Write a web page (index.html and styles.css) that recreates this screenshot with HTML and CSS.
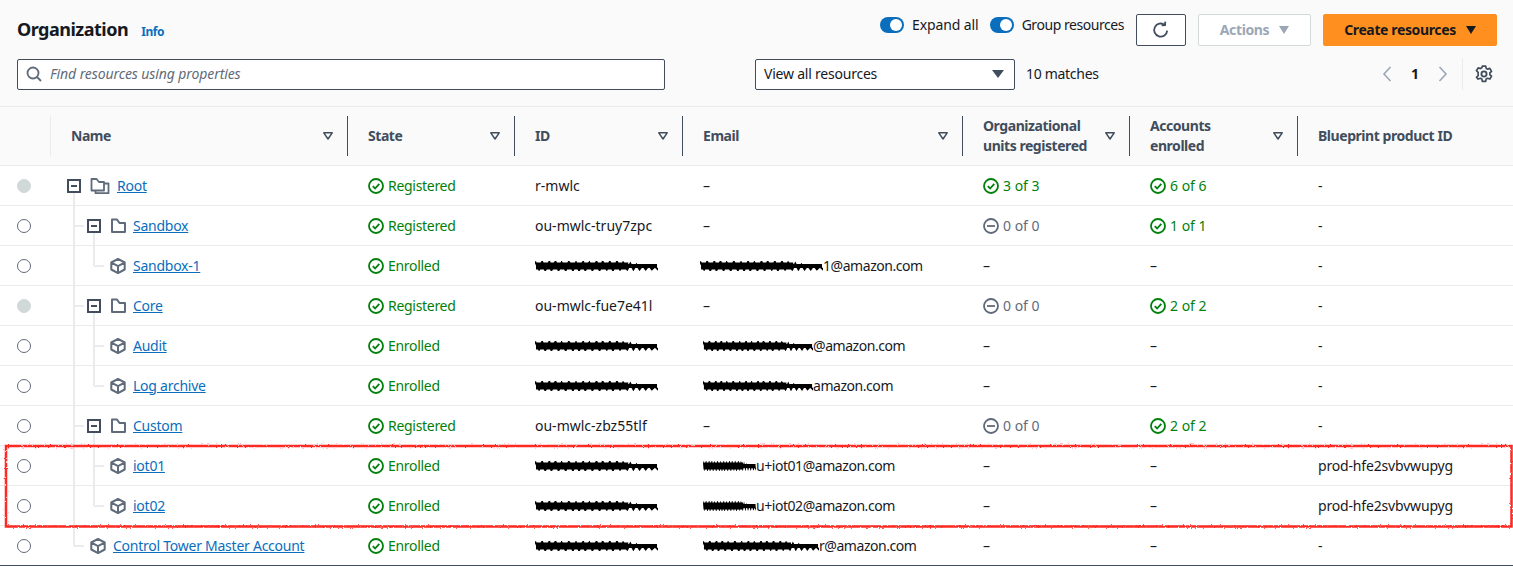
FILE: index.html
```html
<!DOCTYPE html>
<html lang="en">
<head>
<meta charset="utf-8">
<title>Organization</title>
<link rel="stylesheet" href="styles.css">
</head>
<body>
<svg class="sprite" width="0" height="0" aria-hidden="true">
  <defs>
    <symbol id="i-ok" viewBox="0 0 16 16"><circle cx="8" cy="8" r="7" fill="none" stroke="currentColor" stroke-width="1.8"/><path d="M4.800 8.200l2.300 2.300 4.200-4.600" fill="none" stroke="currentColor" stroke-width="1.8"/></symbol>
    <symbol id="i-none" viewBox="0 0 16 16"><circle cx="8" cy="8" r="7" fill="none" stroke="currentColor" stroke-width="1.8"/><path d="M4 8h8" fill="none" stroke="currentColor" stroke-width="1.8"/></symbol>
    <symbol id="i-cube" viewBox="0 0 16 16"><path d="M8 .9l6.700 3.600v7L8 15.100l-6.700-3.600v-7zM1.500 4.700L8 8.200l6.500-3.500M8 8.200v6.800" fill="none" stroke="currentColor" stroke-width="2" stroke-linejoin="round"/></symbol>
    <symbol id="i-folder" viewBox="0 0 16 16"><path d="M2 1.500h5l2.500 3.500h5.500v9H2z" fill="none" stroke="currentColor" stroke-width="2" stroke-linejoin="round"/></symbol>
    <symbol id="i-folders" viewBox="0 0 20 16"><path d="M1.500 1h5l2.500 3h5v8.500H1.500z" fill="none" stroke="currentColor" stroke-width="1.800" stroke-linejoin="round"/><path d="M5.500 12.500v2.700h13V5.500H14" fill="none" stroke="currentColor" stroke-width="1.800" stroke-linejoin="round"/></symbol>
    <symbol id="i-filter" viewBox="0 0 10 8"><path d="M.8.8h8.400L5 7z" fill="none" stroke="currentColor" stroke-width="1.500" stroke-linejoin="round"/></symbol>
    <symbol id="i-scribble" viewBox="0 0 120 10" preserveAspectRatio="none"><path d="M0 .5l4 8 3-8 3 9 4-9 2 9 4-9 3 9 3-8 4 8 3-9 4 9 3-8 3 8 4-9 2 9 4-8 3 8 4-9 3 9 3-9 4 8 3-8 3 9 4-9 3 8 3-7 4 7 3-6 3 6 3-5 3 5 3-4 3 4 3-4 3 4 3-3 3 3 3-3 3 3 3-3 3 3" fill="none" stroke="#000" stroke-width="1.800"/><path d="M1 1.500h90v7H1z" fill="#000"/><path d="M90 3h29v4H90z" fill="#000"/></symbol>
  </defs>
</svg>

<header class="toolbar">
  <div class="toolbar-top">
    <div class="title-group">
      <h1 class="title">Organization</h1>
      <a class="info" href="#">Info</a>
    </div>
    <div class="actions">
      <span class="toggle-label"><span class="toggle"></span>Expand all</span>
      <span class="toggle-label tight"><span class="toggle"></span>Group resources</span>
      <button class="btn btn-icon" type="button" aria-label="Refresh">
        <svg width="18" height="18" viewBox="0 0 16 16"><path d="M13.500 8.500a5.800 5.800 0 1 1-2.200-5M11.800.6l-.2 3.100-3 .1" fill="none" stroke="currentColor" stroke-width="1.600"/></svg>
      </button>
      <button class="btn btn-disabled" type="button">Actions<span class="caret"></span></button>
      <button class="btn btn-primary" type="button">Create resources<span class="caret"></span></button>
    </div>
  </div>
  <div class="toolbar-bottom">
    <label class="search">
      <svg width="16" height="16" viewBox="0 0 16 16"><circle cx="7" cy="7" r="5.500" fill="none" stroke="currentColor" stroke-width="1.800"/><path d="M11 11l4 4" stroke="currentColor" stroke-width="1.800"/></svg>
      <span class="search-text">Find resources using properties</span>
    </label>
    <div class="select">View all resources<span class="caret"></span></div>
    <span class="matches">10 matches</span>
    <div class="pager">
      <svg class="chev" width="12" height="16" viewBox="0 0 12 16"><path d="M9.500 1L3 8l6.500 7" fill="none" stroke="currentColor" stroke-width="1.600"/></svg>
      <strong class="page-no">1</strong>
      <svg class="chev" width="12" height="16" viewBox="0 0 12 16"><path d="M2.500 1L9 8l-6.500 7" fill="none" stroke="currentColor" stroke-width="1.600"/></svg>
      <span class="gear-wrap">
        <svg width="18" height="18" viewBox="0 0 16 16"><circle cx="8" cy="8" r="2.300" fill="none" stroke="currentColor" stroke-width="1.600"/><path d="M6.500 1h3l.4 2 1.300.7 2-.7 1.500 2.600-1.500 1.400v1.500l1.500 1.400-1.500 2.600-2-.7-1.300.7-.4 2h-3l-.4-2-1.300-.7-2 .7L1.300 10.900l1.500-1.400V6.500L1.300 5.100l1.500-2.600 2 .7 1.300-.7z" fill="none" stroke="currentColor" stroke-width="1.500" stroke-linejoin="round"/></svg>
      </span>
    </div>
  </div>
</header>

<table class="grid">
  <colgroup>
    <col class="c-sel"><col class="c-name"><col class="c-state"><col class="c-id"><col class="c-email"><col class="c-ou"><col class="c-acc"><col class="c-bp">
  </colgroup>
  <thead>
    <tr>
      <th><div class="th-in th-light"></div></th>
      <th><div class="th-in"><span>Name</span><svg class="filter"><use href="#i-filter"/></svg></div></th>
      <th><div class="th-in"><span>State</span><svg class="filter"><use href="#i-filter"/></svg></div></th>
      <th><div class="th-in"><span>ID</span><svg class="filter"><use href="#i-filter"/></svg></div></th>
      <th><div class="th-in"><span>Email</span><svg class="filter"><use href="#i-filter"/></svg></div></th>
      <th><div class="th-in"><span>Organizational<br>units registered</span><svg class="filter"><use href="#i-filter"/></svg></div></th>
      <th><div class="th-in"><span>Accounts<br>enrolled</span><svg class="filter"><use href="#i-filter"/></svg></div></th>
      <th><div class="th-in th-last"><span>Blueprint product ID</span></div></th>
    </tr>
  </thead>
  <tbody>
    <tr>
      <td class="sel"><span class="radio radio-off"></span></td>
      <td class="tree"><div class="tree-in"><span class="box"></span><svg class="ico ico-root"><use href="#i-folders"/></svg><a href="#">Root</a></div></td>
      <td><span class="st ok"><svg class="st-i"><use href="#i-ok"/></svg>Registered</span></td>
      <td>r-mwlc</td><td>–</td>
      <td><span class="st cnt ok"><svg class="st-i"><use href="#i-ok"/></svg>3 of 3</span></td>
      <td><span class="st cnt ok"><svg class="st-i"><use href="#i-ok"/></svg>6 of 6</span></td>
      <td>-</td>
    </tr>
    <tr>
      <td class="sel"><span class="radio"></span></td>
      <td class="tree"><div class="tree-in"><span class="guide branch"></span><span class="box"></span><svg class="ico"><use href="#i-folder"/></svg><a href="#">Sandbox</a></div></td>
      <td><span class="st ok"><svg class="st-i"><use href="#i-ok"/></svg>Registered</span></td>
      <td>ou-mwlc-truy7zpc</td><td>–</td>
      <td><span class="st cnt none"><svg class="st-i"><use href="#i-none"/></svg>0 of 0</span></td>
      <td><span class="st cnt ok"><svg class="st-i"><use href="#i-ok"/></svg>1 of 1</span></td>
      <td>-</td>
    </tr>
    <tr>
      <td class="sel"><span class="radio"></span></td>
      <td class="tree"><div class="tree-in"><span class="guide through"></span><span class="guide end"></span><svg class="ico"><use href="#i-cube"/></svg><a href="#">Sandbox-1</a></div></td>
      <td><span class="st ok"><svg class="st-i"><use href="#i-ok"/></svg>Enrolled</span></td>
      <td><svg class="scrib scrib-id"><use href="#i-scribble"/></svg></td>
      <td class="mail"><svg class="scrib scrib-120"><use href="#i-scribble"/></svg>1@amazon.com</td>
      <td>–</td><td>–</td><td>-</td>
    </tr>
    <tr>
      <td class="sel"><span class="radio radio-off"></span></td>
      <td class="tree"><div class="tree-in"><span class="guide branch"></span><span class="box"></span><svg class="ico"><use href="#i-folder"/></svg><a href="#">Core</a></div></td>
      <td><span class="st ok"><svg class="st-i"><use href="#i-ok"/></svg>Registered</span></td>
      <td>ou-mwlc-fue7e41l</td><td>–</td>
      <td><span class="st cnt none"><svg class="st-i"><use href="#i-none"/></svg>0 of 0</span></td>
      <td><span class="st cnt ok"><svg class="st-i"><use href="#i-ok"/></svg>2 of 2</span></td>
      <td>-</td>
    </tr>
    <tr>
      <td class="sel"><span class="radio"></span></td>
      <td class="tree"><div class="tree-in"><span class="guide through"></span><span class="guide branch"></span><svg class="ico"><use href="#i-cube"/></svg><a href="#">Audit</a></div></td>
      <td><span class="st ok"><svg class="st-i"><use href="#i-ok"/></svg>Enrolled</span></td>
      <td><svg class="scrib scrib-id"><use href="#i-scribble"/></svg></td>
      <td class="mail"><svg class="scrib scrib-112"><use href="#i-scribble"/></svg>@amazon.com</td>
      <td>–</td><td>–</td><td>-</td>
    </tr>
    <tr>
      <td class="sel"><span class="radio"></span></td>
      <td class="tree"><div class="tree-in"><span class="guide through"></span><span class="guide end"></span><svg class="ico"><use href="#i-cube"/></svg><a href="#">Log archive</a></div></td>
      <td><span class="st ok"><svg class="st-i"><use href="#i-ok"/></svg>Enrolled</span></td>
      <td><svg class="scrib scrib-id"><use href="#i-scribble"/></svg></td>
      <td class="mail"><svg class="scrib scrib-112"><use href="#i-scribble"/></svg>amazon.com</td>
      <td>–</td><td>–</td><td>-</td>
    </tr>
    <tr>
      <td class="sel"><span class="radio"></span></td>
      <td class="tree"><div class="tree-in"><span class="guide branch"></span><span class="box"></span><svg class="ico"><use href="#i-folder"/></svg><a href="#">Custom</a></div></td>
      <td><span class="st ok"><svg class="st-i"><use href="#i-ok"/></svg>Registered</span></td>
      <td>ou-mwlc-zbz55tlf</td><td>–</td>
      <td><span class="st cnt none"><svg class="st-i"><use href="#i-none"/></svg>0 of 0</span></td>
      <td><span class="st cnt ok"><svg class="st-i"><use href="#i-ok"/></svg>2 of 2</span></td>
      <td>-</td>
    </tr>
    <tr>
      <td class="sel"><span class="radio"></span></td>
      <td class="tree"><div class="tree-in"><span class="guide through"></span><span class="guide branch"></span><svg class="ico"><use href="#i-cube"/></svg><a href="#">iot01</a></div></td>
      <td><span class="st ok"><svg class="st-i"><use href="#i-ok"/></svg>Enrolled</span></td>
      <td><svg class="scrib scrib-id"><use href="#i-scribble"/></svg></td>
      <td class="mail"><svg class="scrib scrib-56"><use href="#i-scribble"/></svg>u+iot01@amazon.com</td>
      <td>–</td><td>–</td><td class="bp">prod-hfe2svbvwupyg</td>
    </tr>
    <tr>
      <td class="sel"><span class="radio"></span></td>
      <td class="tree"><div class="tree-in"><span class="guide through"></span><span class="guide end"></span><svg class="ico"><use href="#i-cube"/></svg><a href="#">iot02</a></div></td>
      <td><span class="st ok"><svg class="st-i"><use href="#i-ok"/></svg>Enrolled</span></td>
      <td><svg class="scrib scrib-id"><use href="#i-scribble"/></svg></td>
      <td class="mail"><svg class="scrib scrib-56"><use href="#i-scribble"/></svg>u+iot02@amazon.com</td>
      <td>–</td><td>–</td><td class="bp">prod-hfe2svbvwupyg</td>
    </tr>
    <tr>
      <td class="sel"><span class="radio"></span></td>
      <td class="tree"><div class="tree-in"><span class="guide end"></span><svg class="ico"><use href="#i-cube"/></svg><a href="#">Control Tower Master Account</a></div></td>
      <td><span class="st ok"><svg class="st-i"><use href="#i-ok"/></svg>Enrolled</span></td>
      <td><svg class="scrib scrib-id"><use href="#i-scribble"/></svg></td>
      <td class="mail"><svg class="scrib scrib-116"><use href="#i-scribble"/></svg>r@amazon.com</td>
      <td>–</td><td>–</td><td>-</td>
    </tr>
  </tbody>
</table>

<svg class="markup" width="1513" height="567" aria-hidden="true">
  <defs>
    <filter id="rough" x="-1%" y="-10%" width="102%" height="120%">
      <feTurbulence type="fractalNoise" baseFrequency="0.6" numOctaves="2" seed="3"/>
      <feDisplacementMap in="SourceGraphic" scale="2.500"/>
    </filter>
  </defs>
  <rect class="markup-rect" x="6" y="446" width="1505.500" height="80.500" filter="url(#rough)"/>
</svg>
</body>
</html>
```
FILE: styles.css
```css
* { box-sizing: border-box; }
html, body { margin: 0; height: 567px; overflow: hidden; }
body {
  position: relative;
  background: #fff;
  color: #16191f;
  font: 14px/20px "Noto Sans", "Liberation Sans", sans-serif;
}
a { color: #0a6ebd; letter-spacing: -.25px; }
.sprite { position: absolute; }

/* toolbar */
.toolbar {
  height: 107px;
  padding: 14px 16px 0 17px;
  background: #fafafa;
  border-bottom: 1px solid #e9ebed;
}
.toolbar-top { display: flex; justify-content: space-between; align-items: flex-start; height: 32px; }
.title-group { display: flex; align-items: baseline; gap: 13px; height: 30px; }
.title { margin: 0; font-size: 18px; line-height: 30px; font-weight: 700; letter-spacing: -.5px; }
.info { font-size: 12px; font-weight: 700; text-decoration: none; letter-spacing: -.4px; }
.actions { display: flex; align-items: flex-start; }
.toggle-label { display: flex; align-items: center; gap: 8px; height: 22px; margin-right: 11px; letter-spacing: -.1px; }
.toggle-label.tight { margin-right: 12px; letter-spacing: -.45px; }
.toggle { position: relative; width: 24px; height: 16px; border-radius: 8px; background: #0a6ebd; }
.toggle::after {
  content: ""; position: absolute; right: 2px; top: 2px;
  width: 12px; height: 12px; border-radius: 50%; background: #fff;
}
.btn {
  display: flex; align-items: center; justify-content: center; gap: 10px;
  height: 32px; border-radius: 2px; border: 1px solid #414d5c;
  background: #fff; font: 700 14px/20px "Noto Sans", "Liberation Sans", sans-serif; color: #16191f;
  letter-spacing: -.37px;
}
.btn-icon { width: 50px; color: #414d5c; }
.btn-disabled { width: 113px; margin-left: 12px; border-color: #d5dbdb; color: #9ba7b6; }
.btn-primary { width: 174px; margin-left: 12px; border-color: #ff9020; background: #ff9020; }
.caret { width: 0; height: 0; border-left: 5.5px solid transparent; border-right: 5.5px solid transparent; border-top: 8px solid currentColor; }

.toolbar-bottom { display: flex; align-items: center; height: 30px; margin-top: 13px; }
.search {
  display: flex; align-items: center; gap: 8px; width: 648px; height: 31px; padding-left: 8px;
  background: #fff; border: 1px solid #414d5c; border-radius: 2px; color: #5f6b7a;
}
.search-text { font-style: italic; letter-spacing: -.1px; }
.select {
  display: flex; align-items: center; justify-content: space-between;
  width: 260px; height: 31px; margin-left: 90px; padding: 0 10px 0 8px;
  background: #fff; border: 1px solid #414d5c; border-radius: 2px; letter-spacing: -.22px;
}
.select .caret { color: #414d5c; border-left-width: 6px; border-right-width: 6px; }
.matches { margin-left: 11px; letter-spacing: -.3px; }
.pager { display: flex; align-items: center; margin-left: auto; height: 32px; }
.chev { color: #9ba7b6; }
.page-no { width: 44px; text-align: center; }
.gear-wrap {
  display: flex; align-items: center; justify-content: flex-end;
  width: 31px; height: 32px; margin-left: 13px; margin-right: 4px;
  border-left: 1px solid #e9ebed; color: #414d5c;
}

/* table */
.grid { width: 1513px; table-layout: fixed; border-collapse: separate; border-spacing: 0; }
.c-sel { width: 51px; } .c-name { width: 297px; } .c-state { width: 167px; } .c-id { width: 168px; }
.c-email { width: 280px; } .c-ou { width: 167px; } .c-acc { width: 168px; } .c-bp { width: 215px; }
th {
  height: 59px; padding: 9px 0; background: #fafafa; border-bottom: 1px solid #e9ebed;
  font-weight: 700; text-align: left; color: #414d5c; letter-spacing: -.45px;
}
.th-in {
  display: flex; align-items: center; justify-content: space-between;
  height: 40px; padding: 0 14px 0 20px; border-right: 1px solid #414d5c;
}
.th-light { border-right-color: #e9ebed; }
.th-last { border-right: 0; }
.filter { flex: none; width: 10px; height: 8px; color: #414d5c; }
td {
  height: 40px; padding: 0 0 0 20px; border-bottom: 1px solid #e9ebed; white-space: nowrap;
}
tbody tr:last-child td { border-bottom-color: #414d5c; }
td.sel { padding: 0 0 0 17px; }
td.bp { letter-spacing: -.17px; }
td.mail { letter-spacing: -.45px; }
.radio { display: block; width: 14px; height: 14px; border: 1.3px solid #5f6b7a; border-radius: 50%; }
.radio-off { background: #d1d8d8; border-color: #d1d8d8; }
.st { display: flex; align-items: center; gap: 4px; letter-spacing: -.3px; }
.st.cnt { letter-spacing: 0; }
.st-i { flex: none; width: 16px; height: 16px; }
.ok { color: #037f0c; }
.none { color: #5f6b7a; }
.scrib { display: inline-block; vertical-align: middle; height: 10px; position: relative; top: -1px; }
.scrib-id { width: 123px; }
.scrib-120 { width: 123px; margin-left: -3px; }
.scrib-116 { width: 116px; }
.scrib-112 { width: 110px; }
.scrib-56 { width: 53px; }

/* tree */
td.tree { padding: 0 0 0 16px; }
.tree-in { display: flex; align-items: center; height: 39px; }
.guide { position: relative; flex: none; width: 20px; align-self: stretch; }
.guide::before {
  content: ""; position: absolute; left: 6px; top: 0; bottom: -1px; width: 2px; background: #e9ebed;
}
.guide.branch::after, .guide.end::after {
  content: ""; position: absolute; left: 8px; top: 19px; width: 9px; height: 2px; background: #e9ebed;
}
.guide.end::before { bottom: 18px; border-bottom-left-radius: 2px; }
.box {
  position: relative; flex: none; width: 14px; height: 14px; margin-right: 6px;
  border: 2px solid #414d5c;
}
.box::before { content: ""; position: absolute; left: 2px; right: 2px; top: 4px; height: 2px; background: #414d5c; }
.box::after {
  content: ""; position: absolute; left: 4px; top: 12px; width: 2px; height: 13px; background: #e9ebed;
}
.ico { flex: none; width: 16px; height: 16px; margin: 0 7px 0 3px; color: #5f6b7a; }
.ico-root { width: 20px; }

/* hand-drawn annotation over the page */
.markup { position: absolute; left: 0; top: 0; pointer-events: none; }
.markup-rect { fill: none; stroke: #ff2a20; stroke-width: 2.5; }
```
